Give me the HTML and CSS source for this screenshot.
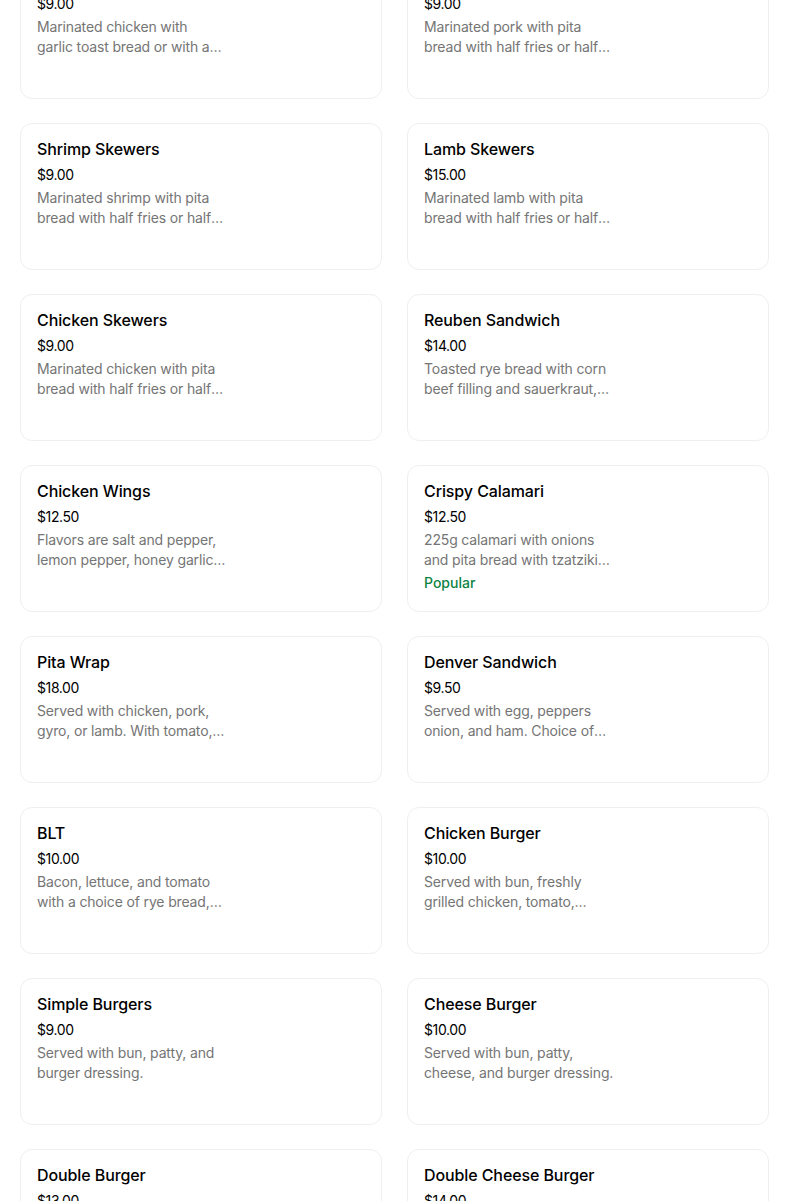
FILE: index.html
```html
<!DOCTYPE html>
<html lang="en">
<head>
<meta charset="utf-8">
<title>Menu</title>
<link rel="stylesheet" href="styles.css">
</head>
<body>
<main class="menu">
  <div class="card"><div class="info"><h3 class="title">Chicken Souvlaki</h3><div class="price">$9.00</div><p class="desc">Marinated chicken with garlic toast bread or with a side of fries and tzatziki sauce.</p></div></div>
  <div class="card"><div class="info"><h3 class="title">Pork Skewers</h3><div class="price">$9.00</div><p class="desc">Marinated pork with pita bread with half fries or half salad and tzatziki sauce.</p></div></div>

  <div class="card"><div class="info"><h3 class="title">Shrimp Skewers</h3><div class="price">$9.00</div><p class="desc">Marinated shrimp with pita bread with half fries or half salad and tzatziki sauce.</p></div></div>
  <div class="card"><div class="info"><h3 class="title">Lamb Skewers</h3><div class="price">$15.00</div><p class="desc">Marinated lamb with pita bread with half fries or half salad and tzatziki sauce.</p></div></div>

  <div class="card"><div class="info"><h3 class="title">Chicken Skewers</h3><div class="price">$9.00</div><p class="desc">Marinated chicken with pita bread with half fries or half salad and tzatziki sauce.</p></div></div>
  <div class="card"><div class="info"><h3 class="title">Reuben Sandwich</h3><div class="price">$14.00</div><p class="desc">Toasted rye bread with corn beef filling and sauerkraut, Swiss cheese and dressing.</p></div></div>

  <div class="card"><div class="info"><h3 class="title">Chicken Wings</h3><div class="price">$12.50</div><p class="desc">Flavors are salt and pepper, lemon pepper, honey garlic, teriyaki, buffalo or BBQ.</p></div></div>
  <div class="card"><div class="info"><h3 class="title">Crispy Calamari</h3><div class="price">$12.50</div><p class="desc">225g calamari with onions and pita bread with tzatziki sauce on the side.</p><div class="tag">Popular</div></div></div>

  <div class="card"><div class="info"><h3 class="title">Pita Wrap</h3><div class="price">$18.00</div><p class="desc">Served with chicken, pork, gyro, or lamb. With tomato, onion, lettuce and tzatziki.</p></div></div>
  <div class="card"><div class="info"><h3 class="title">Denver Sandwich</h3><div class="price">$9.50</div><p class="desc">Served with egg, peppers onion, and ham. Choice of toasted white or brown bread.</p></div></div>

  <div class="card"><div class="info"><h3 class="title">BLT</h3><div class="price">$10.00</div><p class="desc">Bacon, lettuce, and tomato with a choice of rye bread, white or brown toast.</p></div></div>
  <div class="card"><div class="info"><h3 class="title">Chicken Burger</h3><div class="price">$10.00</div><p class="desc">Served with bun, freshly grilled chicken, tomato, mayonnaise and lettuce.</p></div></div>

  <div class="card"><div class="info"><h3 class="title">Simple Burgers</h3><div class="price">$9.00</div><p class="desc">Served with bun, patty, and burger dressing.</p></div></div>
  <div class="card"><div class="info"><h3 class="title">Cheese Burger</h3><div class="price">$10.00</div><p class="desc">Served with bun, patty, cheese, and burger dressing.</p></div></div>

  <div class="card"><div class="info"><h3 class="title">Double Burger</h3><div class="price">$13.00</div><p class="desc">Served with bun, two patties, and burger dressing.</p></div></div>
  <div class="card"><div class="info"><h3 class="title">Double Cheese Burger</h3><div class="price">$14.00</div><p class="desc">Served with bun, two patties, cheese, and burger dressing.</p></div></div>
</main>
</body>
</html>
```

FILE: styles.css
```css
html, body {
  margin: 0;
  padding: 0;
  background: #ffffff;
}

body {
  font-family: Inter, "Noto Sans", "Liberation Sans", sans-serif;
  color: #000000;
  overflow: hidden;
}

.menu {
  display: grid;
  grid-template-columns: 362px 362px;
  column-gap: 25px;
  row-gap: 24px;
  padding: 0 20px;
  margin-top: -48px;
}

.card {
  box-sizing: border-box;
  height: 147px;
  border: 1px solid #efefef;
  border-radius: 12px;
  background: #ffffff;
  padding: 13px 16px 12px;
}

.info {
  display: flex;
  flex-direction: column;
  width: 190px;
}

.title {
  margin: 0;
  font-size: 16px;
  line-height: 24px;
  font-weight: 500;
  color: #000000;
  letter-spacing: -0.1px;
  white-space: nowrap;
}

.price {
  margin-top: 4px;
  font-size: 14px;
  line-height: 20px;
  color: #000000;
  letter-spacing: -0.4px;
}

.desc {
  margin: 3px 0 0;
  font-size: 14px;
  line-height: 20px;
  color: #757575;
  letter-spacing: -0.15px;
  display: -webkit-box;
  -webkit-line-clamp: 2;
  -webkit-box-orient: vertical;
  overflow: hidden;
}

.tag {
  margin-top: 3px;
  font-size: 14px;
  line-height: 20px;
  font-weight: 500;
  color: #0e8345;
}
```
